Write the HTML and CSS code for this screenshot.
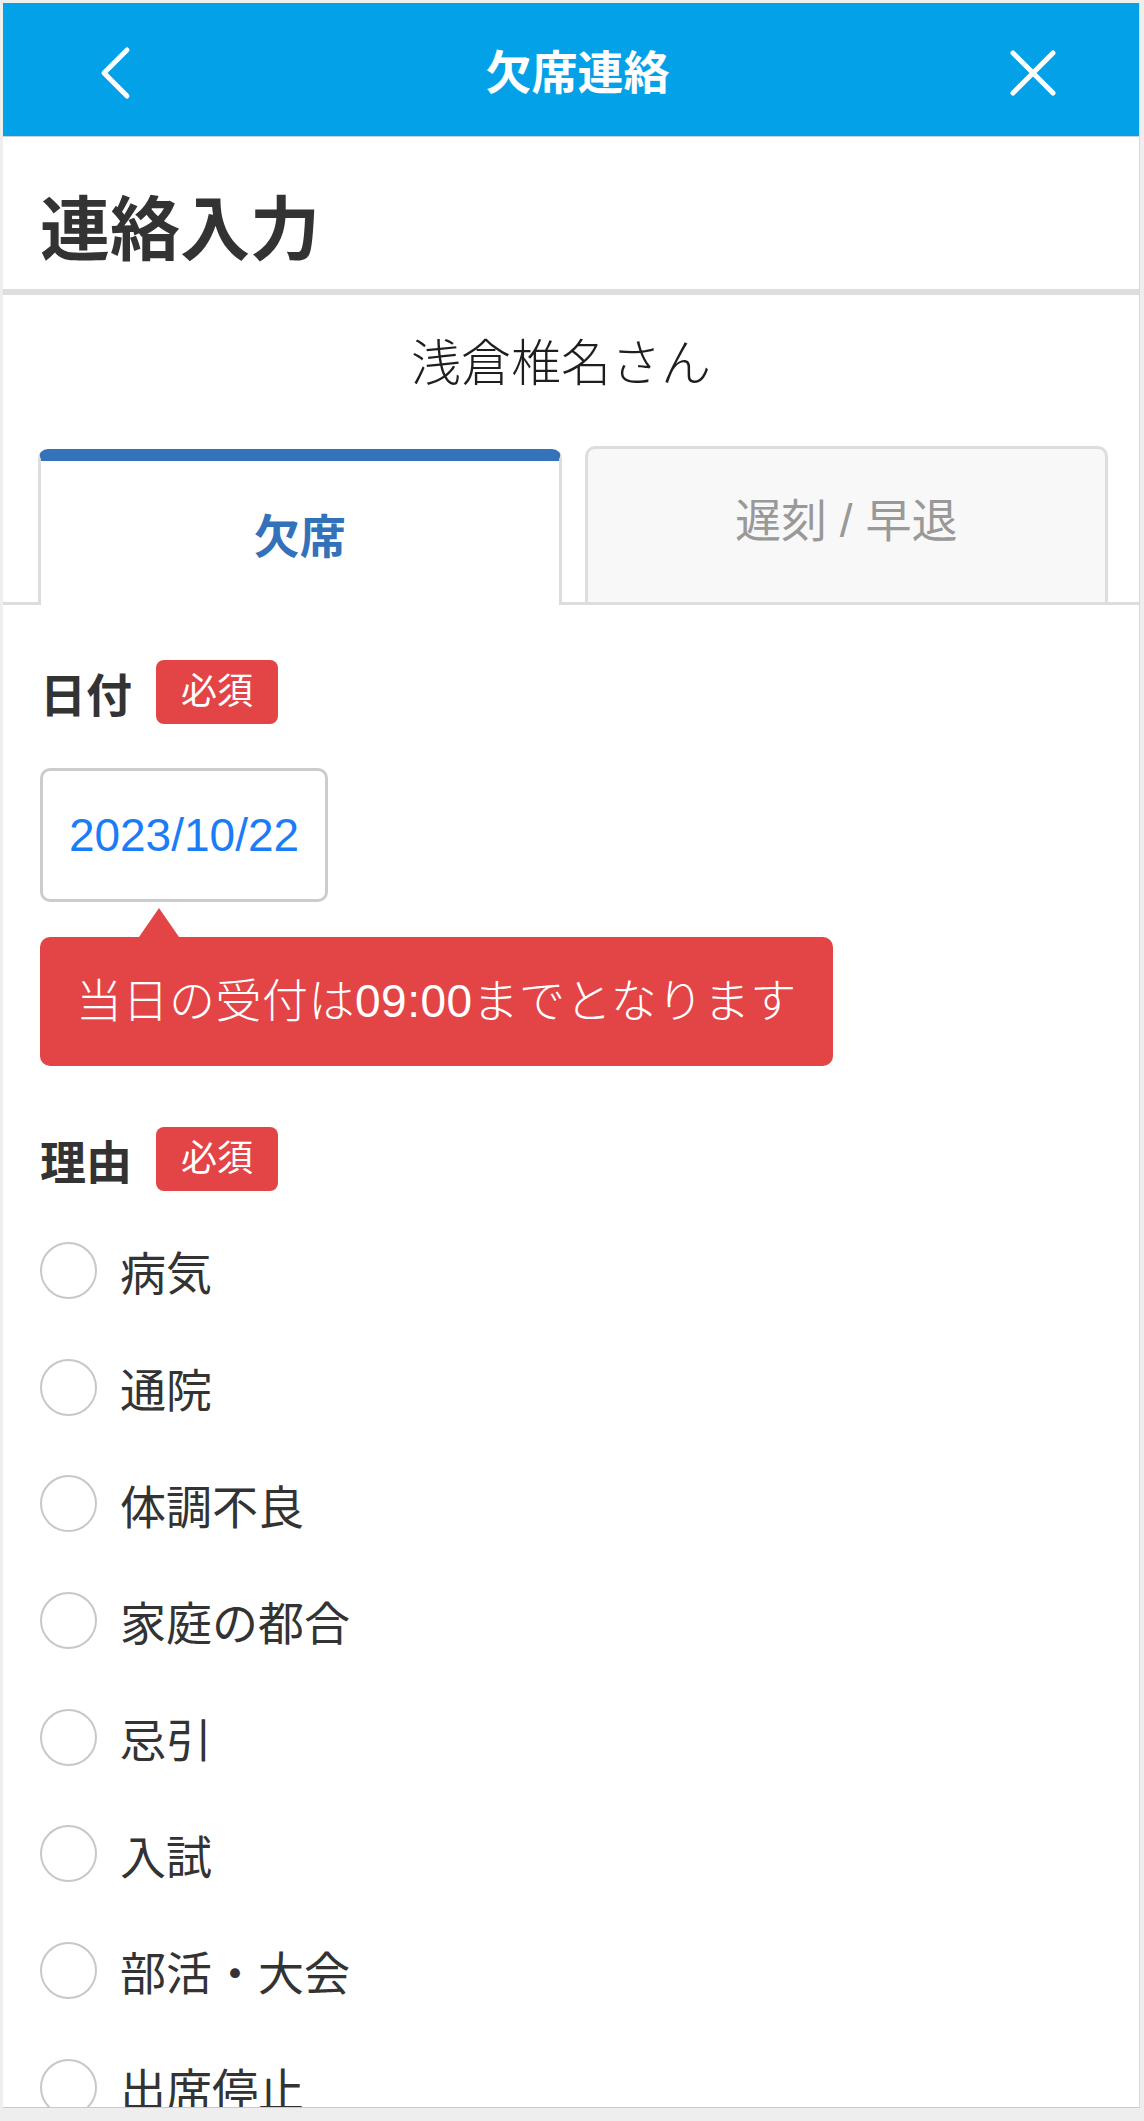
FILE: index.html
```html
<!DOCTYPE html>
<html lang="ja">
<head>
    <meta charset="UTF-8">
    <meta name="viewport" content="width=device-width, initial-scale=1.0">
    <title>欠席連絡</title>
    <link rel="stylesheet" href="styles.css">
</head>
<body>

    <div class="app">
        <header class="navbar">
            <a class="nav-btn nav-back" href="#">
                <svg width="34" height="54" viewBox="0 0 34 54"><path d="M30 4 L7 27 L30 50" fill="none" stroke="#fff" stroke-width="5" stroke-linecap="round" stroke-linejoin="round"/></svg>
            </a>
            <h1 class="nav-title">欠席連絡</h1>
            <a class="nav-btn nav-close" href="#">
                <svg width="50" height="50" viewBox="0 0 50 50"><path d="M5 5 L45 45 M45 5 L5 45" fill="none" stroke="#fff" stroke-width="5" stroke-linecap="round"/></svg>
            </a>
        </header>

        <div class="page-title">
            <h2>連絡入力</h2>
        </div>

        <div class="student">浅倉椎名さん</div>

        <div class="tabs">
            <div class="tab active">欠席</div>
            <div class="tab">遅刻 / 早退</div>
        </div>

        <form class="form">
            <div class="field-label">
                <span>日付</span>
                <span class="badge">必須</span>
            </div>
            <div class="date-input">2023/10/22</div>
            <div class="notice">当日の受付は09:00までとなります</div>

            <div class="field-label reason-label">
                <span>理由</span>
                <span class="badge">必須</span>
            </div>
            <ul class="reasons">
                <li><span class="radio"></span>病気</li>
                <li><span class="radio"></span>通院</li>
                <li><span class="radio"></span>体調不良</li>
                <li><span class="radio"></span>家庭の都合</li>
                <li><span class="radio"></span>忌引</li>
                <li><span class="radio"></span>入試</li>
                <li><span class="radio"></span>部活・大会</li>
                <li><span class="radio"></span>出席停止</li>
            </ul>
        </form>
    </div>

</body>
</html>
```

FILE: styles.css
```css
html, body {
    height: 100%;
    overflow: hidden;
}
body {
    margin: 0;
    padding: 3px 0 0 3px;
    box-sizing: border-box;
    background: #eeeeee;
    font-family: "Liberation Sans", "Noto Sans CJK JP", sans-serif;
    color: #333;
}
.app {
    width: 1136px;
    height: 2104px;
    background: #fff;
    overflow: hidden;
    border-right: 1px solid #d9d9d9;
    border-bottom: 1px solid #c9c9c9;
}

/* header */
.navbar {
    height: 134px;
    box-sizing: border-box;
    padding-top: 6px;
    background: #03a1e8;
    display: flex;
    align-items: center;
    border-bottom: 1px solid #c8d4da;
}
.nav-btn {
    width: 220px;
    display: flex;
    align-items: center;
}
.nav-back {
    padding-left: 94px;
}
.nav-close {
    justify-content: flex-end;
    padding-right: 81px;
}
.nav-btn svg {
    display: block;
}
.nav-title {
    flex: 1;
    margin: 0;
    text-align: center;
    color: #fff;
    font-size: 46px;
    font-weight: 700;
    line-height: 1;
}

.page-title {
    height: 158px;
    box-sizing: border-box;
    padding: 59px 0 0 37px;
    border-bottom: 6px solid #dedede;
}
.page-title h2 {
    margin: 0;
    font-size: 70px;
    line-height: 70px;
    font-weight: 700;
    color: #333;
}

.student {
    height: 151px;
    box-sizing: border-box;
    padding: 44px 20px 0 0;
    text-align: center;
    font-size: 50px;
    line-height: 50px;
    font-weight: 300;
    color: #1e1e1e;
}

/* tabs */
.tabs {
    display: flex;
    align-items: flex-end;
    gap: 23px;
    height: 156px;
    padding: 0 31px 0 35px;
    border-bottom: 3px solid #dddddd;
}
.tab {
    flex: 1;
    height: 156px;
    box-sizing: border-box;
    display: flex;
    align-items: center;
    justify-content: center;
    padding-bottom: 18px;
    border: 3px solid #dddddd;
    border-bottom: none;
    border-radius: 10px 10px 0 0;
    background: #f8f8f8;
    color: #999;
    font-size: 46px;
}
.tab.active {
    margin-bottom: -3px;
    padding-bottom: 0;
    border-top: 12px solid #3472b9;
    background: #fff;
    color: #3371b8;
    font-weight: 700;
}

/* form */
.form {
    padding: 55px 37px 0;
}
.field-label {
    display: flex;
    align-items: center;
    gap: 24px;
    height: 64px;
    font-size: 46px;
    font-weight: 700;
    color: #333;
}
.badge {
    height: 64px;
    line-height: 64px;
    padding: 0 25px;
    border-radius: 8px;
    background: #e34546;
    color: #fff;
    font-size: 36px;
    font-weight: 400;
}
.date-input {
    margin-top: 44px;
    width: 288px;
    height: 134px;
    box-sizing: border-box;
    border: 3px solid #cccccc;
    border-radius: 10px;
    display: flex;
    align-items: center;
    justify-content: center;
    color: #1a7cf6;
    font-size: 46px;
}
.notice {
    position: relative;
    width: fit-content;
    margin-top: 35px;
    padding: 40px 36px;
    border-radius: 10px;
    background: #e34546;
    color: #fff;
    font-size: 46px;
    line-height: 49px;
    font-weight: 300;
    letter-spacing: 0.5px;
}
.notice::before {
    content: "";
    position: absolute;
    left: 99px;
    top: -29px;
    border-left: 20.5px solid transparent;
    border-right: 20.5px solid transparent;
    border-bottom: 29px solid #e34546;
}
.reason-label {
    margin-top: 61px;
}
.reasons {
    list-style: none;
    margin: 21px 0 0;
    padding: 0;
}
.reasons li {
    height: 116.7px;
    display: flex;
    align-items: center;
    font-size: 46px;
    color: #333;
}
.radio {
    width: 57px;
    height: 57px;
    box-sizing: border-box;
    border: 2.5px solid #c8c8c8;
    border-radius: 50%;
    margin-right: 23px;
    flex-shrink: 0;
}
```
